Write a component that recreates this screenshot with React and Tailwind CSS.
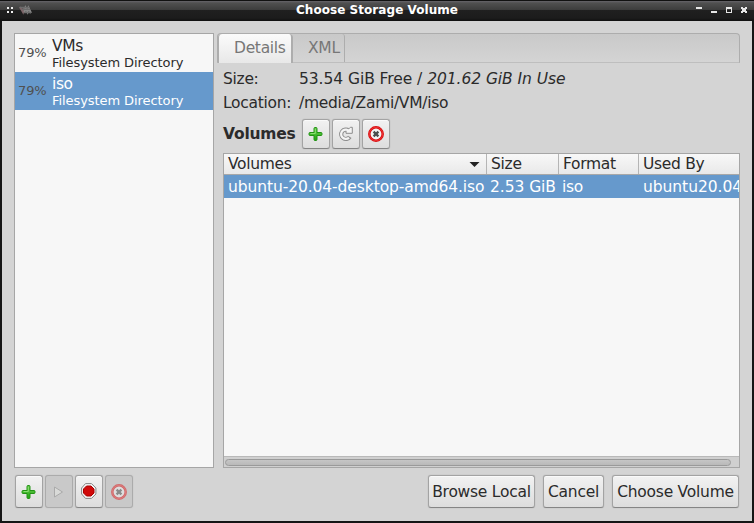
import React from "react";

function PlusIcon() {
  return (
    <svg width="16" height="16" viewBox="0 0 16 16">
      <defs>
        <linearGradient id="plus" x1="0" y1="0" x2="0" y2="1">
          <stop offset="0" stopColor="#6fd052" />
          <stop offset="1" stopColor="#1fa411" />
        </linearGradient>
      </defs>
      <path d="M7 1.500h1q1 0 1 1v4h4q1 0 1 1v1q0 1-1 1H9v4q0 1-1 1H7q-1 0-1-1v-4H2q-1 0-1-1v-1q0-1 1-1h4v-4q0-1 1-1z" fill="url(#plus)" stroke="#229314" strokeWidth="1" />
      <path d="M7.300 3V7.500H2.500" fill="none" stroke="#9be682" strokeWidth="0.800" />
    </svg>
  );
}

function RefreshIcon() {
  return (
    <svg width="16" height="16" viewBox="0 0 16 16" fill="none">
      <path d="M10.800 4.600A4.700 4.700 0 1 0 11.800 10.900" stroke="#8d8d8d" strokeWidth="4.200" />
      <path d="M8 7.300V5.600l4.300-4.300h2v6z" fill="#f4f4f4" stroke="#8d8d8d" strokeWidth="1" strokeLinejoin="round" />
      <path d="M11.500 5.300A4.700 4.700 0 1 0 11 11.700" stroke="#f4f4f4" strokeWidth="2.300" />
    </svg>
  );
}

function DeleteIcon({ faded }) {
  return (
    <svg width="16" height="16" viewBox="0 0 16 16" opacity={faded ? 0.5 : 1}>
      <circle cx="8" cy="8" r="6.700" fill="#f3f3f3" stroke="#d90d10" strokeWidth="2.500" />
      <circle cx="8" cy="8" r="6.700" fill="none" stroke="#f03a3a" strokeWidth="0.800" />
      <path d="M5.600 5.600l4.800 4.800M10.400 5.600l-4.800 4.800" stroke="#4b4e4d" strokeWidth="2.300" />
    </svg>
  );
}

function PlayIcon() {
  return (
    <svg width="16" height="16" viewBox="0 0 16 16" className="-translate-x-px">
      <path d="M4.500 3v10l8-5z" fill="#d9dad8" stroke="#aaaaaa" strokeLinejoin="round" />
    </svg>
  );
}

function StopIcon() {
  return (
    <svg width="16" height="16" viewBox="0 0 16 16" className="-translate-y-px">
      <path d="M4.500 .6h6L14.900 5v6L10.500 15.400h-6L.6 11V5z" fill="#f5f5f5" stroke="#858585" strokeWidth="1" />
      <path d="M5.500 3h4.500l3 3v4l-3 3H5.500l-3-3V6z" fill="#d00909" stroke="#a90000" strokeWidth="1" />
    </svg>
  );
}

const raised =
  "flex items-center justify-center rounded-[3px] border border-[#a3a3a3] border-b-[#858585] bg-linear-to-b from-[#f2f2f2] to-[#dddddd] shadow-[0_0_1px_#9a9a9a,inset_0_1px_0_#fafafa]";
const flat =
  "flex items-center justify-center rounded-[3px] border border-[#ababab] bg-[#c9c9c9] shadow-[0_0_1px_#b0b0b0]";

function Pool({ name, selected }) {
  return (
    <div className={selected ? "flex h-[38px] bg-[#6699cc] text-white" : "flex h-[38px] text-[#2b2b2b]"}>
      <div className="w-[37px] shrink-0 pt-[10px] pl-[3px] text-[13px] leading-[18px] tracking-[-0.1px] text-[#505050]">79%</div>
      <div>
        <div className="h-[20px] pt-[3px] text-[15.5px] leading-[18px] tracking-[-0.4px]">{name}</div>
        <div className="text-[13px] leading-[17px] tracking-[-0.07px]">Filesystem Directory</div>
      </div>
    </div>
  );
}

function TitleBar() {
  return (
    <div className="flex h-[21px] items-center border-t border-[#111111] bg-[linear-gradient(to_bottom,#66646a_0,#505050_2px,#3c3c3c_9px,#202020_9px,#1c1c1c_17px,#101010_20px)] text-white">
      <svg width="60" height="20" viewBox="0 0 60 20" shapeRendering="crispEdges">
        <path d="M7 6h2v2H7zM11 6h2v2h-2zM7 10h2v2H7zM11 10h2v2h-2z" fill="#f0f0f0" />
        <g shapeRendering="auto" fill="none" strokeWidth="2">
          <path d="M20 6l3 5 1-4.500" stroke="#7d6468" />
          <path d="M24.500 11.500l1-4.500 2 4 1-4 2.500 5" stroke="#8e8e8e" />
          <path d="M19.500 6.500h10M22 8.500h8M24 11.500h7" stroke="#6c6c6c" strokeWidth="1.500" />
        </g>
      </svg>
      <div className="flex-1 text-center text-[12px] leading-[18px] font-bold tracking-[0.05px] whitespace-nowrap"><span className="relative -top-px">Choose Storage Volume</span></div>
      <svg width="60" height="20" viewBox="0 0 60 20" shapeRendering="crispEdges" fill="#e6e6e6">
        <path d="M2 6h6v2H2zM17 10h6v2h-6z" />
        <path fillRule="evenodd" d="M32 6h6v6h-6zM33 8v3h4V8z" />
        <path d="M47 6h2v1h2V6h2v2h-1v2h1v2h-2v-1h-2v1h-2v-2h1V8h-1z" />
      </svg>
    </div>
  );
}

export default function App() {
  return (
    <div className="flex h-[523px] w-[754px] flex-col overflow-hidden bg-[#151515] font-['DejaVu_Sans',sans-serif] text-[15.5px] tracking-[-0.3px] whitespace-nowrap text-[#2b2b2b]">
      <TitleBar />
      <div className="mr-[2px] mb-[2px] ml-[2px] flex min-h-0 flex-1 flex-col bg-[#d4d4d4] pt-[12px] pl-[12px]">
        <div className="flex h-[435px]">
          <div className="w-[200px] shrink-0 border border-[#a6a6a6] bg-[#f7f7f7]">
            <Pool name="VMs" />
            <Pool name="iso" selected />
          </div>
          <div className="ml-[3px] flex w-[523px] flex-col">
            <div className="flex h-[30px] rounded-t-[4px] border border-b-[#bebebe] border-[#adadad] bg-linear-to-b from-[#c9c9c9] to-[#d4d4d4] text-[#777777]">
              <div className="h-[29px] w-[75px] rounded-t-[4px] border-x border-r-2 border-[#adadad] bg-linear-to-b from-[#fbfbfb] to-[#e8e8e8] pl-[15px] leading-[29px]">Details</div>
              <div className="w-[52px] rounded-tr-[3px] border-r border-[#adadad] pl-[15px] leading-[29px]">XML</div>
            </div>
            <div className="ml-[6px] flex h-[29px] pt-[6px] leading-[20px]">
              <div className="w-[76px]">Size:</div>
              <div className="tracking-[-0.06px]">53.54 GiB Free / <span className="italic">201.62 GiB In Use</span></div>
            </div>
            <div className="ml-[6px] flex h-[27px] pt-px leading-[20px]">
              <div className="w-[76px]">Location:</div>
              <div>/media/Zami/VM/iso</div>
            </div>
            <div className="ml-[6px] flex h-[34px]">
              <div className="w-[79px] leading-[30px] font-bold tracking-[-0.2px]">Volumes</div>
              <div className="flex gap-[2px]">
                <div className={raised + " h-[30px] w-[28px]"}><PlusIcon /></div>
                <div className={raised + " h-[30px] w-[28px]"}><RefreshIcon /></div>
                <div className={raised + " h-[30px] w-[28px]"}><DeleteIcon /></div>
              </div>
            </div>
            <div className="ml-[6px] flex min-h-0 flex-1 flex-col overflow-hidden border border-[#a6a6a6] bg-[#f7f7f7]">
              <div className="flex h-[21px] shrink-0 border-b border-[#a8a8a8] bg-linear-to-b from-[#f8f8f8] to-[#e9e9e9] leading-[20px]">
                <div className="flex w-[263px] justify-between border-r border-[#b5b5b5] pr-[6px] pl-[4px]">
                  <span>Volumes</span>
                  <svg className="mt-[8px]" width="11" height="6" viewBox="0 0 11 6"><path d="M.5 0h10L5.500 5z" fill="#222222" /></svg>
                </div>
                <div className="w-[72px] border-r border-[#b5b5b5] pl-[4px]">Size</div>
                <div className="w-[80px] border-r border-[#b5b5b5] pl-[4px]">Format</div>
                <div className="pl-[4px]">Used By</div>
              </div>
              <div className="flex h-[23px] shrink-0 bg-[#6699cc] leading-[24px] text-white">
                <div className="w-[263px] shrink-0 pl-[4px] tracking-[-0.09px]">ubuntu-20.04-desktop-amd64.iso</div>
                <div className="w-[72px] shrink-0 pl-[3px] tracking-[-0.06px]">2.53 GiB</div>
                <div className="w-[80px] shrink-0 pl-[3px]">iso</div>
                <div className="shrink-0 pl-[4px] tracking-[-0.05px]">ubuntu20.04</div>
              </div>
              <div className="mt-auto flex h-[11px] items-center border-t border-[#b9b9b9] bg-[#d0d0d0] pl-[1px]">
                <div className="h-[7px] w-[506px] rounded-full border border-[#9a9a9a] bg-linear-to-b from-[#c6c6c6] to-[#b9b9b9]" />
              </div>
            </div>
          </div>
        </div>
        <div className="mt-[7px] mr-[13px] flex h-[33px] items-stretch justify-between pl-[1px]">
          <div className="flex gap-[2px]">
            <div className={raised + " w-[28px]"}><PlusIcon /></div>
            <div className={flat + " w-[28px]"}><PlayIcon /></div>
            <div className={raised + " w-[28px]"}><StopIcon /></div>
            <div className={flat + " w-[28px]"}><DeleteIcon faded /></div>
          </div>
          <div className="flex gap-[8px] leading-[32px] tracking-[-0.25px]">
            <div className={raised + " w-[107px]"}>Browse Local</div>
            <div className={raised + " w-[61px]"}>Cancel</div>
            <div className={raised + " w-[127px]"}>Choose Volume</div>
          </div>
        </div>
      </div>
    </div>
  );
}
